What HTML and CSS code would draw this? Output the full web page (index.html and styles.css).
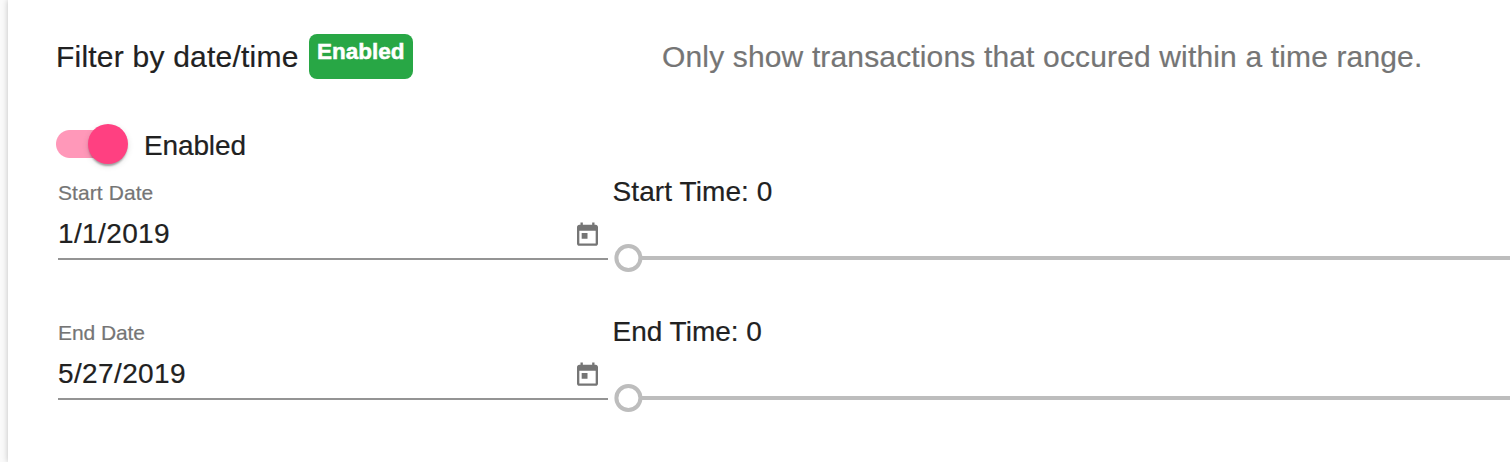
FILE: index.html
```html
<!DOCTYPE html>
<html lang="en">
<head>
<meta charset="utf-8">
<title>Filter by date/time</title>
<link rel="stylesheet" href="styles.css">
</head>
<body>
<main class="panel">
  <header class="panel-header">
    <div class="panel-title"><span class="title-text">Filter by date/time</span><span class="badge">Enabled</span></div>
    <div class="panel-description">Only show transactions that occured within a time range.</div>
  </header>
  <label class="toggle">
    <span class="toggle-bar"><span class="toggle-thumb"></span></span>
    <span class="toggle-label">Enabled</span>
  </label>
  <section class="filter-row">
    <div class="date-field">
      <div class="field-label">Start Date</div>
      <div class="field-input"><span>1/1/2019</span>
        <svg class="calendar" viewBox="-.43 -.3 24 24"><path d="M19 3h-1V1h-2v2H8V1H6v2H5c-1.11 0-1.99.9-1.99 2L3 19c0 1.1.89 2 2 2h14c1.1 0 2-.9 2-2V5c0-1.1-.9-2-2-2zm0 16H5V8h14v11zM7 10h5v5H7z"/></svg>
      </div>
    </div>
    <div class="time-field">
      <div class="time-label start-time">Start Time: 0</div>
      <div class="slider"><svg class="slider-thumb" viewBox="0 0 29 28"><circle cx="14.4" cy="14" r="12"/></svg><span class="slider-track"></span></div>
    </div>
  </section>
  <section class="filter-row">
    <div class="date-field">
      <div class="field-label end-label">End Date</div>
      <div class="field-input"><span>5/27/2019</span>
        <svg class="calendar" viewBox="-.43 -.3 24 24"><path d="M19 3h-1V1h-2v2H8V1H6v2H5c-1.11 0-1.99.9-1.99 2L3 19c0 1.1.89 2 2 2h14c1.1 0 2-.9 2-2V5c0-1.1-.9-2-2-2zm0 16H5V8h14v11zM7 10h5v5H7z"/></svg>
      </div>
    </div>
    <div class="time-field">
      <div class="time-label">End Time: 0</div>
      <div class="slider"><svg class="slider-thumb" viewBox="0 0 29 28"><circle cx="14.4" cy="14" r="12"/></svg><span class="slider-track"></span></div>
    </div>
  </section>
</main>
</body>
</html>
```
FILE: styles.css
```css
* { box-sizing: border-box; }
body {
  margin: 0;
  height: 462px;
  overflow: hidden;
  background: #fafafa;
  color: #212121;
  font-family: "Liberation Sans", Arial, sans-serif;
  font-size: 28px;
  white-space: nowrap;
  -webkit-text-stroke: .2px;
}
.panel {
  height: 462px;
  margin-left: 8px;
  padding-left: 48px;
  background: #fff;
  box-shadow: 0 0 6px rgba(0, 0, 0, .24);
}
.panel-header {
  display: flex;
  height: 124px;
  padding-top: 34px;
  font-size: 30px;
  line-height: 45px;
}
.panel-title {
  display: flex;
  width: 606px;
}
.title-text {
  width: 253px;
  letter-spacing: .22px;
}
.badge {
  width: 104px;
  height: 45px;
  padding: 6px 8px;
  border-radius: 8px;
  background: #28a745;
  color: #fff;
  font-size: 22.5px;
  font-weight: 700;
  line-height: 23px;
  -webkit-text-stroke: .5px;
}
.panel-description {
  color: #757575;
  letter-spacing: .15px;
}
.toggle {
  display: flex;
  align-items: center;
  gap: 16px;
  height: 40px;
}
.toggle-bar {
  display: flex;
  justify-content: flex-end;
  width: 72px;
  height: 40px;
  background: radial-gradient(circle at 14px 20px, #ff98b9 13.5px, transparent 14.5px),
    linear-gradient(#ff98b9, #ff98b9) 14px 6px / 44px 28px no-repeat;
}
.toggle-thumb {
  width: 40px;
  height: 40px;
  border-radius: 50%;
  background: #ff4081;
  box-shadow: 0 4px 2px -2px rgba(0, 0, 0, .2), 0 2px 2px rgba(0, 0, 0, .14), 0 2px 6px rgba(0, 0, 0, .12);
}
.toggle-label {
  padding-top: 4px;
  line-height: 38px;
  letter-spacing: -.13px;
}
.filter-row {
  display: flex;
  height: 140px;
  padding: 14px 0 0 2px;
}
.date-field { width: 550px; }
.field-label {
  height: 30px;
  color: #757575;
  font-size: 21px;
  line-height: 30px;
  letter-spacing: .08px;
}
.end-label { letter-spacing: -.08px; }
.field-input {
  display: flex;
  justify-content: space-between;
  height: 52px;
  padding: 6px 7px 0 0;
  border-bottom: 2px solid #949494;
  line-height: 40px;
  letter-spacing: .37px;
}
.calendar {
  width: 28px;
  height: 28px;
  margin-top: 7px;
  fill: #757575;
}
.time-field { flex: 1; padding-left: 5px; }
.time-label {
  height: 28px;
  margin-left: -.5px;
  line-height: 28px;
}
.start-time { letter-spacing: .1px; }
.slider {
  display: flex;
  align-items: center;
  height: 28px;
  margin-top: 38px;
  padding-left: 1px;
}
.slider-thumb {
  width: 29px;
  height: 28px;
  fill: none;
  stroke: #bdbdbd;
  stroke-width: 4px;
}
.slider-track {
  flex: 1;
  height: 4px;
  margin-left: -1px;
  background: #bdbdbd;
}
```
